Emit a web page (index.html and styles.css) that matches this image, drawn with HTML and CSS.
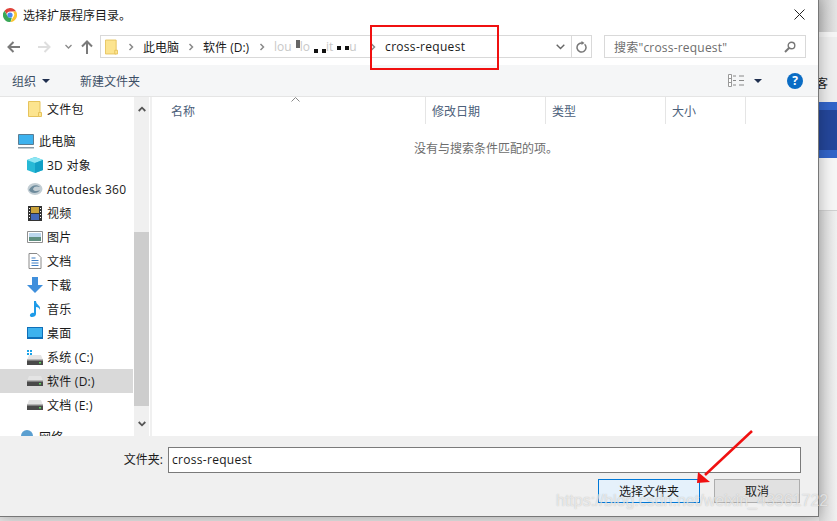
FILE: index.html
```html
<!DOCTYPE html>
<html lang="zh-CN">
<head>
    <meta charset="UTF-8">
    <title>选择扩展程序目录。</title>
    <link rel="stylesheet" href="styles.css">
</head>
<body>
<svg class="defs" width="0" height="0">
    <symbol id="folder" viewBox="0 0 14 16">
        <path d="M.5.5h11.5v15H.5z" fill="#fce48f" stroke="#e6c35c"/>
        <path d="M10.5 11.5h3v4h-3z" fill="#fce48f" stroke="#e6c35c"/>
    </symbol>
    <symbol id="drive" viewBox="0 0 16 10">
        <path d="M2 0h12l2 5H0z" fill="#e4e4e4"/>
        <path d="M0 5h16v5H0z" fill="#4a4a4a"/>
        <path d="M0 4h16v1.500H0z" fill="#b5b5b5"/>
        <path d="M12 7h2v1.500h-2z" fill="#5fd35f"/>
    </symbol>
    <symbol id="chev" viewBox="0 0 6 8">
        <path d="M1.500 1l3 3-3 3" fill="none" stroke="#8a8a8a" stroke-width="1.500"/>
    </symbol>
</svg>

<div class="screen">
    <div class="dialog">
        <div class="titlebar">
            <svg class="chrome" width="14" height="14" viewBox="0 0 16 16">
                <path d="M8 0a8 8 0 0 1 7 4H8a4 4 0 0 0-3.800 2.800L1.700 3A8 8 0 0 1 8 0z" fill="#e0433a"/>
                <path d="M15 4a8 8 0 0 1-6.500 12l3-5.500A4 4 0 0 0 11 4z" fill="#fbc52f"/>
                <path d="M1.700 3l3.500 6a4 4 0 0 0 5 1.800L8.500 16A8 8 0 0 1 1.700 3z" fill="#3aa757"/>
                <circle cx="8" cy="8" r="3" fill="#4a8af0"/>
            </svg>
            <span class="title">选择扩展程序目录。</span>
            <svg class="close" width="11" height="11" viewBox="0 0 11 11">
                <path d="M.5.500l10 10M10.500.500l-10 10" stroke="#222" stroke-width="1"/>
            </svg>
        </div>

        <div class="addressbar">
            <div class="navbtns">
                <svg width="14" height="12" viewBox="0 0 14 12"><path d="M13 6H2M6.500 1L1.500 6l5 5" fill="none" stroke="#7a7a7a" stroke-width="2"/></svg>
                <svg class="gap-fwd" width="14" height="12" viewBox="0 0 14 12"><path d="M1 6h11M7.500 1l5 5-5 5" fill="none" stroke="#dedede" stroke-width="2"/></svg>
                <svg class="gap-down" width="7" height="5" viewBox="0 0 7 5"><path d="M.5 1l3 3 3-3" fill="none" stroke="#8a8a8a" stroke-width="1.300"/></svg>
                <svg class="gap-up" width="12" height="14" viewBox="0 0 12 14"><path d="M6 14V2M1 6.500l5-5 5 5" fill="none" stroke="#7a7a7a" stroke-width="2"/></svg>
            </div>
            <div class="pathbox">
                <svg class="pathfolder" width="13" height="16"><use href="#folder"/></svg>
                <svg class="sep first" width="6" height="8"><use href="#chev"/></svg>
                <span class="computer">此电脑</span>
                <svg class="sep" width="6" height="8"><use href="#chev"/></svg>
                <span>软件 (D:)</span>
                <svg class="sep" width="6" height="8"><use href="#chev"/></svg>
                <span class="masked">lou<i class="blot tall"></i>lo<i class="blot"></i><i class="blot"></i>it<i class="blot raised"></i><i class="blot raised"></i>u<i class="blot"></i></span>
                <svg class="sep" width="6" height="8"><use href="#chev"/></svg>
                <span class="current">cross-request</span>
                <svg class="pathdrop" width="9" height="6" viewBox="0 0 9 6"><path d="M.7.700l3.800 3.800L8.300.700" fill="none" stroke="#666" stroke-width="1.400"/></svg>
                <div class="refresh">
                    <svg width="11" height="12" viewBox="0 0 11 12"><path d="M8.600 3.200A4.500 4.500 0 1 1 5.500 2H7" fill="none" stroke="#777" stroke-width="1.500"/><path d="M5.500 0l3 2-3 2z" fill="#777"/></svg>
                </div>
            </div>
            <div class="searchbox">
                <span>搜索"cross-request"</span>
                <svg width="12" height="12" viewBox="0 0 12 12"><circle cx="7.500" cy="4.500" r="3.300" fill="none" stroke="#777" stroke-width="1.400"/><path d="M5 7l-4 4" stroke="#777" stroke-width="2"/></svg>
            </div>
        </div>

        <div class="toolbar">
            <span class="tool">组织<i class="caret"></i></span>
            <span class="tool newfolder">新建文件夹</span>
            <svg class="viewicon" width="16" height="13" viewBox="0 0 16 13">
                <path d="M.5.500h3v12h-3zM.5 4.500h3M.5 8.500h3" fill="#fff" stroke="#999"/>
                <path d="M5 2h3M5 6.500h3M5 11h3M11 2h5M11 6.500h5M11 11h5" stroke="#888"/>
            </svg>
            <i class="caret dark"></i>
            <span class="help">?</span>
        </div>

        <div class="main">
            <div class="sidebar">
                <ul class="tree">
                    <li class="row sub"><svg width="13" height="16"><use href="#folder"/></svg><span>文件包</span></li>
                    <li class="row top pc">
                        <svg width="16" height="15" viewBox="0 0 16 15"><path d="M.500.500h15v10H.500z" fill="#3db2ee" stroke="#5b7d92"/><path d="M0 13h16v1.500H0z" fill="#8a9aa5"/></svg>
                        <span>此电脑</span>
                    </li>
                    <li class="row sub"><svg width="16" height="16" viewBox="0 0 16 16"><path d="M8 0l8 3v10l-8 3-8-3V3z" fill="#27b9d6"/><path d="M0 3l8 3 8-3-8-3z" fill="#8ee6f3"/><path d="M8 6v10l8-3V3z" fill="#12a0c6"/></svg><span>3D 对象</span></li>
                    <li class="row sub"><svg width="16" height="14" viewBox="0 0 16 14"><ellipse cx="8" cy="7" rx="7.500" ry="6" fill="#c3ced4"/><path d="M2 8c2-5 8-6 11-3-3-1-6-1-7 2 0 2 4 3 7 1-2 4-9 4-11 0z" fill="#6d8b9c"/></svg><span>Autodesk 360</span></li>
                    <li class="row sub"><svg width="14" height="15" viewBox="0 0 14 15"><path d="M0 0h14v15H0z" fill="#333"/><path d="M3 1h8v6H3z" fill="#c9a23a"/><path d="M3 8h8v6H3z" fill="#4468b8"/><path d="M1 2h1v1H1zM1 5h1v1H1zM1 8h1v1H1zM1 11h1v1H1zM12 2h1v1h-1zM12 5h1v1h-1zM12 8h1v1h-1zM12 11h1v1h-1z" fill="#fff"/></svg><span>视频</span></li>
                    <li class="row sub"><svg width="16" height="12" viewBox="0 0 16 12"><path d="M.500.500h15v11H.500z" fill="#fff" stroke="#8f8f8f"/><path d="M2 2h12v4H2z" fill="#bcd7ee"/><path d="M2 6h12v4H2z" fill="#5f8f80"/></svg><span>图片</span></li>
                    <li class="row sub"><svg width="13" height="16" viewBox="0 0 13 16"><path d="M.500.500h8l4 4v11H.500z" fill="#fff" stroke="#8a8a8a"/><path d="M3 5h4M3 7.500h7M3 10h7M3 12.500h7" stroke="#3f7fc4"/></svg><span>文档</span></li>
                    <li class="row sub"><svg width="16" height="16" viewBox="0 0 16 16"><path d="M5 0h6v8h5l-8 8-8-8h5z" fill="#3f8fdc"/></svg><span>下载</span></li>
                    <li class="row sub"><svg width="14" height="16" viewBox="0 0 14 16"><path d="M6 0h2c0 4 5 4 4 9-.500-2-2-3-4-3v7c0 2-2 3-4 3s-3-2-1-3.500c1-.800 2-.800 3-.500z" fill="#1e9be8"/></svg><span>音乐</span></li>
                    <li class="row sub"><svg width="16" height="12" viewBox="0 0 16 12"><path d="M0 0h16v12H0z" fill="#0f6fb8"/><path d="M1 1h14v9H1z" fill="#3db2ee"/></svg><span>桌面</span></li>
                    <li class="row sub"><svg class="drive sys" width="16" height="15" viewBox="0 0 16 15"><path d="M0 0h2v2H0zM3 0h2v2H3zM0 3h2v2H0zM3 3h2v2H3z" fill="#1aa3e8"/><use href="#drive" y="5" width="16" height="10"/></svg><span>系统 (C:)</span></li>
                    <li class="row sub selected"><svg class="drive" width="16" height="10"><use href="#drive"/></svg><span>软件 (D:)</span></li>
                    <li class="row sub"><svg class="drive" width="16" height="10"><use href="#drive"/></svg><span>文档 (E:)</span></li>
                    <li class="row top net">
                        <svg width="16" height="15" viewBox="0 0 16 15"><circle cx="9" cy="6" r="6" fill="#5b9fd0"/><path d="M0 13h16v2H0z" fill="#6d8ea5"/></svg>
                        <span>网络</span>
                    </li>
                </ul>
                <div class="scrollbar">
                    <div class="arrow"><svg width="8" height="6" viewBox="0 0 8 6"><path d="M.7 5l3.300-3.300L7.300 5" fill="none" stroke="#555" stroke-width="1.800"/></svg></div>
                    <div class="track"><div class="thumb"></div></div>
                    <div class="arrow"><svg width="8" height="6" viewBox="0 0 8 6"><path d="M.7 1l3.300 3.300L7.300 1" fill="none" stroke="#555" stroke-width="1.800"/></svg></div>
                </div>
            </div>
            <div class="listing">
                <div class="columns">
                    <span class="col name">名称<svg class="sortmark" width="9" height="5" viewBox="0 0 9 5"><path d="M.5 4.500l4-4 4 4" fill="none" stroke="#888"/></svg></span>
                    <span class="col date">修改日期</span>
                    <span class="col type">类型</span>
                    <span class="col size">大小</span>
                </div>
                <p class="empty">没有与搜索条件匹配的项。</p>
            </div>
        </div>

        <div class="footer">
            <div class="namerow">
                <label for="folder_name">文件夹:</label>
                <input type="text" id="folder_name" value="cross-request">
            </div>
            <div class="buttons">
                <button class="btn primary">选择文件夹</button>
                <button class="btn">取消</button>
            </div>
        </div>
    </div>

    <div class="behind">
        <div class="b-top"></div>
        <div class="b-line"></div>
        <div class="b-grey"><span class="b-glyph">客</span></div>
        <div class="b-blue"></div>
        <div class="b-navy"></div>
        <div class="b-blue"></div>
        <div class="b-pale"></div>
        <div class="b-rest"></div>
    </div>

    <!-- annotations drawn over the screenshot -->
    <div class="redbox"></div>
    <svg class="redarrow" width="56" height="54" viewBox="0 0 56 54">
        <path d="M55 1L8 45" stroke="#f01010" stroke-width="2.500"/>
        <path d="M0 53l1-11 12 10z" fill="#f01010"/>
    </svg>
    <div class="watermark">https://blog.csdn.net/weixin_43361722</div>
</div>
</body>
</html>
```

FILE: styles.css
```css
* {
    box-sizing: border-box;
}

html, body {
    margin: 0;
    height: 100%;
    overflow: hidden;
}

body {
    font-family: "Open Sans", "Noto Sans CJK SC", sans-serif;
    font-size: 12px;
    color: #1a1a1a;
    background: #e6e6e6;
}

.defs {
    position: absolute;
}

.screen {
    position: relative;
    display: flex;
    width: 837px;
    height: 521px;
    overflow: hidden;
}

.dialog {
    position: relative;
    z-index: 1;
    flex: none;
    display: flex;
    flex-direction: column;
    width: 819px;
    height: 517px;
    background: white;
    border-right: 1px solid #777;
    border-bottom: 1px solid #777;
    box-shadow: 0 0 14px rgba(0,0,0,0.3);
}

/* title bar */
.titlebar {
    flex: none;
    display: flex;
    align-items: center;
    height: 32px;
    padding: 0 13px 3px 3px;
}

.title {
    margin-left: 6px;
}

.close {
    margin-left: auto;
}

/* address row */
.addressbar {
    flex: none;
    display: flex;
    align-items: flex-start;
    height: 33px;
    padding-top: 3px;
}

.navbtns {
    flex: none;
    display: flex;
    align-items: center;
    width: 100px;
    height: 23px;
    padding-left: 7px;
}

.gap-fwd { margin-left: 16px; }
.gap-down { margin-left: 14px; }
.gap-up { margin-left: 9px; }

.pathbox {
    flex: none;
    display: flex;
    align-items: center;
    width: 492px;
    height: 23px;
    padding-left: 4px;
    border: 1px solid #d9d9d9;
}

.pathfolder {
    flex: none;
}

.sep {
    flex: none;
    margin: 0 9px 0 10px;
}

.computer {
    margin-right: -1px;
}

.masked {
    display: flex;
    align-items: center;
    width: 86px;
    height: 100%;
    color: #c8c8c8;
    overflow: hidden;
}

.blot {
    flex: none;
    width: 4px;
    height: 4px;
    margin: 8px 0 0 4px;
    background: #111;
}

.blot.tall {
    height: 8px;
    margin-top: -6px;
    margin-right: 0;
    background: #666;
}

.blot.raised {
    margin-top: 3px;
}

.current {
    letter-spacing: 0.3px;
}

.pathdrop {
    margin-left: auto;
    margin-right: 6px;
}

.refresh {
    display: flex;
    align-items: center;
    justify-content: center;
    width: 20px;
    height: 100%;
    border-left: 1px solid #d9d9d9;
}

.searchbox {
    flex: none;
    display: flex;
    align-items: center;
    justify-content: space-between;
    width: 202px;
    height: 23px;
    margin-left: 12px;
    padding: 0 9px;
    border: 1px solid #d9d9d9;
    color: #6d6d6d;
    letter-spacing: 0.2px;
}

/* toolbar */
.toolbar {
    flex: none;
    display: flex;
    align-items: center;
    height: 32px;
    padding: 0 15px 0 12px;
    background: #f5f6f7;
    border-bottom: 1px solid #e5e5e5;
    color: #3d4f66;
}

.tool {
    display: flex;
    align-items: center;
}

.newfolder {
    margin-left: 30px;
}

.caret {
    width: 0;
    height: 0;
    margin-left: 6px;
    border-left: 4px solid transparent;
    border-right: 4px solid transparent;
    border-top: 4px solid #1f2f4f;
}

.viewicon {
    margin-left: auto;
}

.caret.dark {
    margin-left: 10px;
}

.help {
    display: flex;
    align-items: center;
    justify-content: center;
    width: 16px;
    height: 16px;
    margin-left: 25px;
    border-radius: 50%;
    background: #0a6cc4;
    color: white;
    font-weight: bold;
    font-size: 12px;
}

/* tree and file list */
.main {
    flex: 1;
    display: flex;
    min-height: 0;
}

.sidebar {
    flex: none;
    display: flex;
    width: 152px;
    border-right: 2px solid #f0f0f0;
}

.tree {
    flex: none;
    width: 134px;
    height: 100%;
    margin: 0;
    padding: 0 1px 0 0;
    list-style: none;
    overflow: hidden;
}

.row {
    display: flex;
    align-items: center;
    height: 24px;
    letter-spacing: 0.25px;
}

.row svg {
    flex: none;
}

.row.sub {
    padding-left: 27px;
}

.row.sub svg {
    width: 16px;
    margin-right: 4px;
}

.row.top {
    padding-left: 18px;
}

.row.top svg {
    margin-right: 5px;
}

.row.pc {
    margin-top: 8px;
}

.row.net {
    margin-top: 8px;
}

.row.selected {
    background: #d9d9d9;
}

.scrollbar {
    flex: none;
    display: flex;
    flex-direction: column;
    width: 15px;
    background: #f0f0f0;
}

.arrow {
    flex: none;
    display: flex;
    align-items: center;
    justify-content: center;
    height: 24px;
}

.track {
    flex: 1;
    display: flex;
    flex-direction: column;
    justify-content: flex-end;
}

.thumb {
    height: 174px;
    margin-bottom: 6px;
    background: #cdcdcd;
}

.listing {
    flex: 1;
    min-width: 0;
}

.columns {
    display: flex;
    height: 27px;
}

.col {
    display: flex;
    align-items: center;
    position: relative;
    padding-left: 6px;
    border-right: 1px solid #e5e5e5;
    color: #4c607a;
}

.col.name {
    width: 274px;
    padding-left: 19px;
}

.col.date { width: 120px; }
.col.type { width: 120px; }
.col.size { width: 80px; }

.sortmark {
    position: absolute;
    left: 139px;
    top: 0;
}

.empty {
    margin: 15px 0 0 0;
    padding-left: 2px;
    text-align: center;
    color: #6d6d6d;
}

/* bottom panel */
.footer {
    flex: none;
    height: 80px;
    background: #f0f0f0;
}

.namerow {
    display: flex;
    align-items: center;
    justify-content: flex-end;
    height: 26px;
    margin-top: 11px;
    padding-right: 17px;
}

.namerow label {
    margin-right: 5px;
    padding-bottom: 2px;
}

.namerow input {
    width: 633px;
    height: 26px;
    padding: 0 3px 2px;
    border: 1px solid #7a7a7a;
    background: white;
    font: inherit;
    color: inherit;
    letter-spacing: 0.3px;
    outline: none;
}

.buttons {
    display: flex;
    justify-content: flex-end;
    gap: 14px;
    margin-top: 6px;
    padding-right: 18px;
}

.btn {
    width: 86px;
    height: 24px;
    padding: 0;
    background: #e1e1e1;
    border: 1px solid #adadad;
    font: inherit;
    color: inherit;
}

.btn.primary {
    width: 102px;
    background: #e5f1fb;
    border-color: #0078d7;
}

/* page behind the dialog */
.behind {
    flex: 1;
    display: flex;
    flex-direction: column;
    min-width: 0;
    overflow: hidden;
}

.b-top { height: 32px; background: linear-gradient(90deg, #c8c8c8, #e4e4e4); }
.b-line { height: 5px; background: #f6f6f6; }
.b-grey { height: 65px; background: #eeeeee; padding-top: 40px; }
.b-blue { height: 8px; background: #3264c8; }
.b-navy { height: 40px; background: #24469a; }
.b-pale { height: 53px; background: #f6f6f6; border-bottom: 1px solid #d0d0d0; }
.b-rest { flex: 1; background: linear-gradient(90deg, #d8d8d8, #f0f0f0); }

.b-glyph {
    display: block;
    margin-left: -3px;
    line-height: 14px;
}

/* red annotations */
.redbox {
    position: absolute;
    z-index: 2;
    left: 370px;
    top: 25px;
    width: 129px;
    height: 45px;
    border: 2px solid #f01010;
}

.redarrow {
    position: absolute;
    z-index: 2;
    left: 697px;
    top: 430px;
}

.watermark {
    position: absolute;
    z-index: 3;
    left: 556px;
    top: 492px;
    font-family: "Liberation Sans", sans-serif;
    font-size: 16px;
    color: rgba(255,255,255,0.65);
    text-shadow: 0 0 1px rgba(120,120,120,0.5);
    white-space: nowrap;
}
```
